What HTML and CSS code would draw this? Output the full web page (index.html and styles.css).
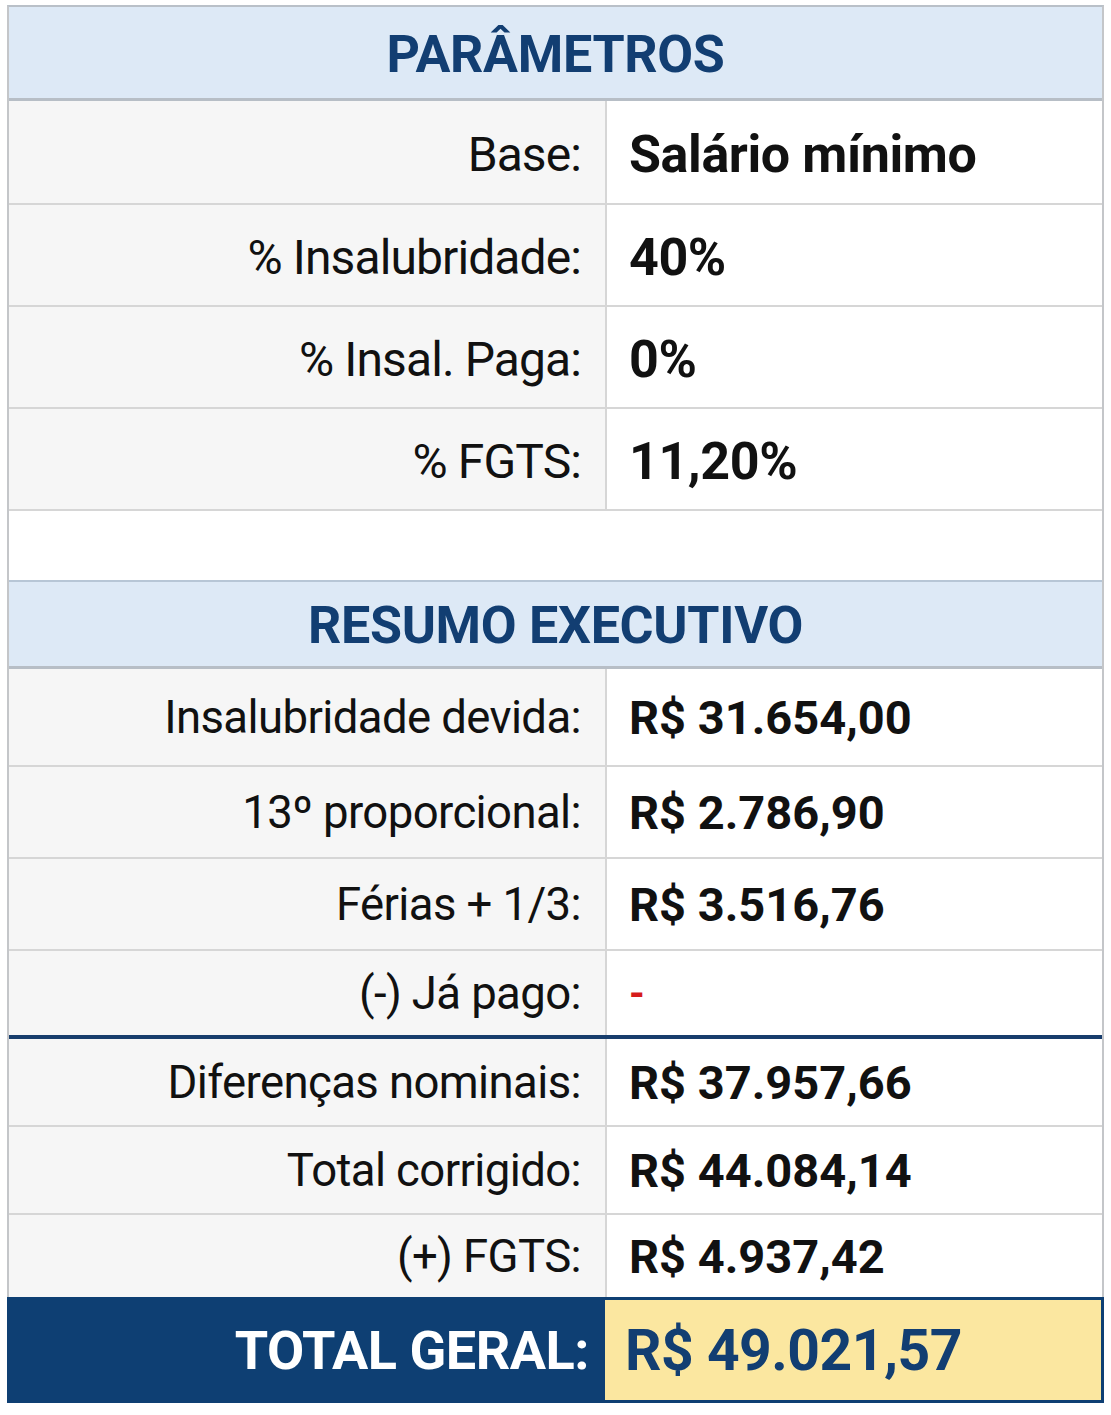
FILE: index.html
```html
<!DOCTYPE html>
<html lang="pt-BR">
<head>
<meta charset="utf-8">
<link rel="stylesheet" href="styles.css">
</head>
<body>
<div class="sheet">
  <div class="head h1">PARÂMETROS</div>
  <div class="row r-base p"><div class="lbl">Base:</div><div class="val">Salário mínimo</div></div>
  <div class="row r-p p"><div class="lbl">% Insalubridade:</div><div class="val">40%</div></div>
  <div class="row r-p p"><div class="lbl">% Insal. Paga:</div><div class="val">0%</div></div>
  <div class="row r-p p"><div class="lbl">% FGTS:</div><div class="val">11,20%</div></div>
  <div class="blank"></div>
  <div class="head h2">RESUMO EXECUTIVO</div>
  <div class="row r-a"><div class="lbl">Insalubridade devida:</div><div class="val">R$ 31.654,00</div></div>
  <div class="row r-b"><div class="lbl">13º proporcional:</div><div class="val">R$ 2.786,90</div></div>
  <div class="row r-b"><div class="lbl">Férias + 1/3:</div><div class="val">R$ 3.516,76</div></div>
  <div class="row r-c sep"><div class="lbl">(-) Já pago:</div><div class="val neg">-</div></div>
  <div class="row r-c"><div class="lbl">Diferenças nominais:</div><div class="val">R$ 37.957,66</div></div>
  <div class="row r-c"><div class="lbl">Total corrigido:</div><div class="val">R$ 44.084,14</div></div>
  <div class="row r-d"><div class="lbl">(+) FGTS:</div><div class="val">R$ 4.937,42</div></div>
  <div class="total"><div class="tlbl">TOTAL GERAL:</div><div class="tval">R$ 49.021,57</div></div>
</div>
</body>
</html>
```
FILE: styles.css
```css
* { box-sizing: border-box; }
html, body { margin: 0; padding: 0; background: #ffffff; }
body { font-family: Roboto, "Liberation Sans", sans-serif; color: #111; }
.sheet {
  margin: 5px 7px 0 7px;
  width: 1097px;
  border-left: 2px solid #c4c6c9;
  border-right: 2px solid #c4c6c9;
  border-top: 2px solid #b9c0c8;
  display: flex;
  flex-direction: column;
}
.head {
  background: #dde9f6;
  color: #123e72;
  font-weight: 700;
  font-size: 52px;
  display: flex;
  align-items: center;
  justify-content: center;
  border-bottom: 3px solid #b7bec6;
  letter-spacing: -0.3px;
}
.h1 { height: 94px; padding-top: 4px; }
.h2 { height: 89px; border-top: 2px solid #b7c6d6; padding-top: 2px; }
.row {
  display: grid;
  grid-template-columns: 598px 1fr;
  border-bottom: 2px solid #d6d6d6;
}
.lbl {
  background: #f6f6f6;
  border-right: 2px solid #d6d6d6;
  text-align: right;
  padding-right: 24px;
  font-size: 45.5px;
  display: flex;
  align-items: center;
  justify-content: flex-end;
  letter-spacing: -0.6px;
}
.val {
  font-size: 47px;
  font-weight: 700;
  padding-left: 22px;
  display: flex;
  align-items: center;
  background: #fff;
}
.p .lbl { font-size: 48px; letter-spacing: -0.9px; padding-top: 4px; }
.p .val { font-size: 52px; letter-spacing: -0.4px; padding-top: 4px; }
.neg { color: #d61b1b; font-weight: 700; font-size: 40px; }
.r-base { height: 104px; }
.r-p { height: 102px; }
.r-a { height: 98px; }
.r-b { height: 92px; }
.r-c { height: 88px; }
.r-d { height: 82px; border-bottom: none; }
.sep { border-bottom: 4px solid #173d6c; }
.blank { height: 69px; background: #fff; }
.total {
  display: grid;
  grid-template-columns: 598px 1fr;
  height: 106px;
  background: #0e3f73;
  padding: 3px 3px 3px 0;
  margin-left: -2px;
  margin-right: -2px;
}
.tlbl {
  color: #fff;
  font-weight: 700;
  font-size: 54px;
  display: flex;
  align-items: center;
  justify-content: flex-end;
  padding-right: 16px;
  padding-left: 2px;
  letter-spacing: -0.5px;
}
.tval {
  background: #fbe7a0;
  color: #123e72;
  font-weight: 700;
  font-size: 57px;
  display: flex;
  align-items: center;
  padding-left: 20px;
  letter-spacing: -0.5px;
}
```
